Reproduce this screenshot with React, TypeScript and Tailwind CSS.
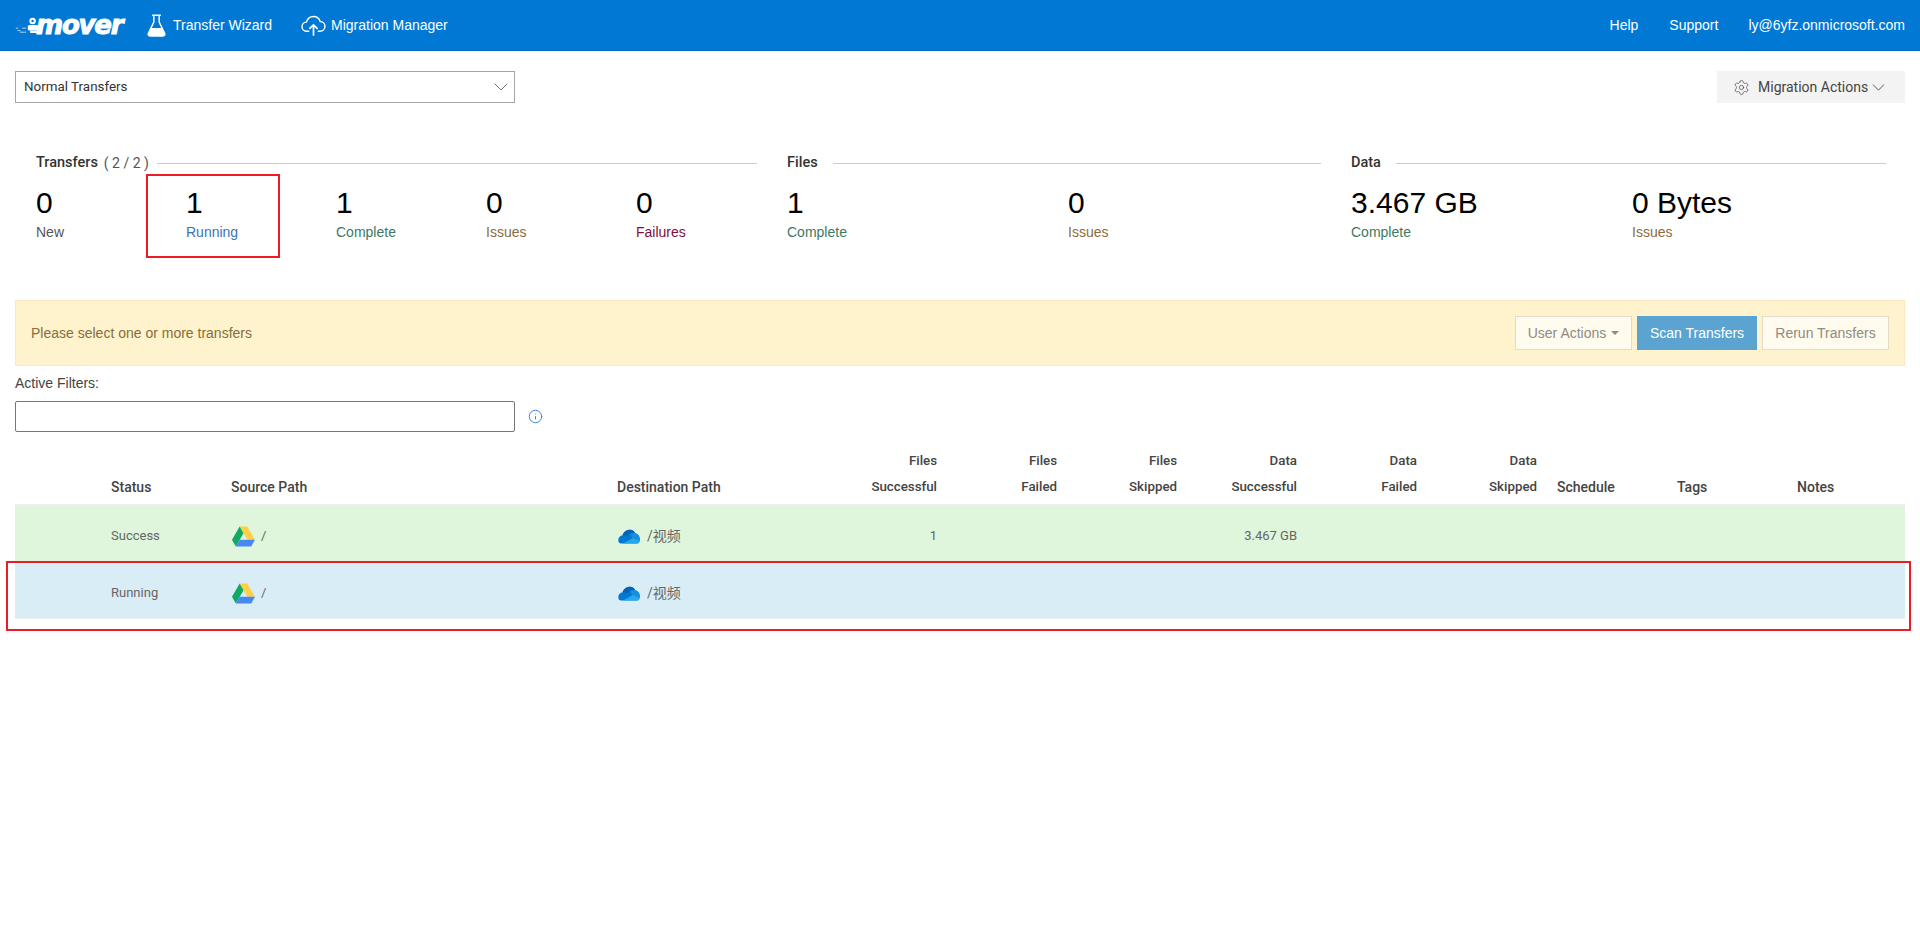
import React from "react";
import { Settings, Info } from "lucide-react";

const arial = "font-['Liberation_Sans',Arial,sans-serif]";
const ui = "font-['Roboto','Noto_Sans_CJK_SC',sans-serif]";
const grid = "grid grid-cols-[88px_120px_386px_217px_120px_120px_120px_120px_120px_120px_123px_120px_116px]";

function Chevron({ className }: { className: string }) {
  return (
    <svg viewBox="0 0 14 8" className={className} fill="none" stroke="currentColor" strokeWidth="1">
      <path d="M.7.7 7 7l6.300-6.300" />
    </svg>
  );
}

function Flask() {
  return (
    <svg viewBox="0 0 20 24" className="h-[23px] w-[19px]" fill="none">
      <path d="M6 1.200h8" stroke="#fff" strokeWidth="1.600" strokeLinecap="round" />
      <path d="M7.200 1.500v6.800L1.400 20.300c-.7 1.500.2 2.700 1.700 2.700h13.800c1.500 0 2.400-1.200 1.700-2.700L12.800 8.300V1.500" stroke="#fff" strokeWidth="1.500" />
      <path d="M4.600 14.600h10.800l3 6.200c.4 1-.2 2.200-1.500 2.200H3.100c-1.300 0-1.900-1.200-1.500-2.200z" fill="#fff" />
    </svg>
  );
}

function CloudUp() {
  return (
    <svg viewBox="0 0 26 22" className="h-[21px] w-[25px]" fill="none" stroke="#fff" strokeWidth="1.500" strokeLinecap="round" strokeLinejoin="round">
      <path d="M8 17H6.200C3.300 17 1 14.900 1 12.200c0-2.500 2-4.500 4.500-4.700C6.600 4 9.400 1.500 13 1.500c3.400 0 6.100 2.200 7 5.300 2.800.1 5 2.300 5 5 0 2.900-2.200 5.200-5.100 5.200H18" />
      <path d="M13 21V10.500M9.200 14 13 10.200l3.800 3.800" strokeWidth="1.800" />
    </svg>
  );
}

function Logo() {
  return (
    <div className="flex items-center w-[132px]">
      <svg viewBox="0 0 30 22" className="h-[22px] w-[24px] shrink-0 -mr-[3px]">
        <circle cx="22" cy="6" r="4" fill="#fff" />
        <circle cx="22" cy="6" r="1.500" fill="#0078d4" />
        <rect x="16" y="11" width="13" height="7" rx="2" fill="#fff" />
        <rect x="19" y="18" width="9" height="3" fill="#fff" />
        <path d="M1 15h3M3 18h4M6 20h8M9 15h5" stroke="#dbeafe" strokeWidth="1" />
      </svg>
      <span className="font-['DejaVu_Sans',sans-serif] font-bold italic text-[26px] leading-none tracking-[-1.2px] text-white [-webkit-text-stroke:1px_#fff]">mover</span>
    </div>
  );
}

function Drive() {
  return (
    <svg viewBox="0 0 24 21" className="h-[21px] w-[23px] shrink-0">
      <polygon points="8,0 16,0 24,14 16,14" fill="#ffcf48" />
      <polygon points="8,0 12,7 4,21 0,14" fill="#11a861" />
      <polygon points="8,14 24,14 20,21 4,21" fill="#4687f4" />
    </svg>
  );
}

function OneDrive() {
  return (
    <svg viewBox="0 0 24 16" className="h-[15px] w-[22px] shrink-0">
      <path d="M3.500 15.700C1.500 15.700.3 14 .3 12 .3 9 2.500 6.800 5 6.600 6 3 9.500.6 13.300.6c2.500 0 4.500 1.400 5.400 3.900 3 .4 5.100 3 5.100 6.500 0 2.800-1.300 4.700-3.300 4.700z" fill="#0078d4" />
      <path d="M5 6.600C6 3 9.500.6 13.300.6c2.500 0 4.500 1.400 5.400 3.900-2.200-.5-4.200 0-5.700 1L10 8C8.500 7 7 6.500 5 6.600z" fill="#0364b8" />
      <path d="M13 5.500c1.700-1 3.700-1.500 5.700-1 3 .4 5.100 3 5.100 8L16 9.500z" fill="#1490df" />
      <path d="M5.500 15.700 16 9.500l7.800 3c-.3 2-1.800 3.200-3.300 3.200z" fill="#28a8ea" />
    </svg>
  );
}

function Stat({ value, label, color }: { value: string; label: string; color: string }) {
  return (
    <div className="flex flex-col pt-px">
      <span className={`${arial} text-[30px] leading-[34px] text-black`}>{value}</span>
      <span className={`${arial} text-[14px] leading-[20px] mt-[2px] ${color}`}>{label}</span>
    </div>
  );
}

function Heading({ title, extra }: { title: string; extra?: string }) {
  return (
    <div className="flex items-center h-[20px] mb-[12px]">
      <span className={`${ui} font-medium text-[14.5px] text-[#333]`}>{title}</span>
      {extra && <span className={`${ui} text-[14px] text-[#555] ml-[6px]`}>{extra}</span>}
      <div className={`flex-1 h-px bg-[#ccc] ${extra ? "ml-[8px]" : "ml-[15px]"}`} />
    </div>
  );
}

function Head2({ a, b }: { a: string; b: string }) {
  return (
    <div className={`${ui} font-medium text-[13.3px] text-[#444] text-right pr-[9px] flex flex-col leading-[26px]`}>
      <span>{a}</span>
      <span>{b}</span>
    </div>
  );
}

function HeadL({ t, cls = "pl-2" }: { t: string; cls?: string }) {
  return <div className={`${ui} font-medium text-[14px] text-[#444] ${cls} self-end leading-[26px]`}>{t}</div>;
}

function Row({ status, bg, files, data }: { status: string; bg: string; files?: string; data?: string }) {
  const cell = `${ui} text-[13px] text-[#666]`;
  return (
    <div className={`${grid} items-center h-[57px] pt-[5px] border-t-[2px] border-[#eeeeee] ${bg}`}>
      <div />
      <div className={`${cell} pl-2`}>{status}</div>
      <div className={`${cell} pl-[9px] flex items-center gap-[6px]`}><Drive /> /</div>
      <div className={`${cell} pl-[9px] flex items-center gap-[7px]`}><OneDrive /><span className="text-[14px]">/视频</span></div>
      <div className={`${cell} text-right pr-[9px]`}>{files}</div>
      <div />
      <div />
      <div className={`${cell} text-[13.5px] text-right pr-[9px]`}>{data}</div>
    </div>
  );
}

export default function App() {
  return (
    <div className="relative min-h-[936px] bg-white">
      <header className={`${arial} h-[51px] bg-[#0078d4] border-b border-[#0067b8] flex items-center pl-[15px] pr-[15px] text-white text-[14px]`}>
        <Logo />
        <div className="flex items-center gap-[7px]">
          <Flask />
          <span>Transfer Wizard</span>
        </div>
        <div className="flex items-center gap-[5px] ml-[29px]">
          <CloudUp />
          <span>Migration Manager</span>
        </div>
        <div className="ml-auto flex items-center gap-[30px]">
          <span className="mr-px">Help</span>
          <span>Support</span>
          <span>ly@6yfz.onmicrosoft.com</span>
        </div>
      </header>

      <main className="px-[15px]">
        <div className="flex items-center justify-between pt-[20px]">
          <div className={`${ui} w-[500px] h-[32px] border border-[#a6a6a6] flex items-center justify-between pl-[8px] pr-[6px] text-[13.4px] text-[#333]`}>
            <span>Normal Transfers</span>
            <Chevron className="w-[14px] h-[8px] text-[#777]" />
          </div>
          <div className={`${ui} w-[188px] h-[32px] bg-[#f3f3f3] flex items-center pl-[16px] text-[14px] text-[#444]`}>
            <Settings size={17} strokeWidth={1} className="text-[#444]" />
            <span className="ml-[8px]">Migration Actions</span>
            <Chevron className="ml-[4px] w-[13px] h-[7px] text-[#444]" />
          </div>
        </div>

        <div className="flex gap-[30px] pl-[21px] pr-[19px] mt-[50px]">
          <section className="w-[721px]">
            <Heading title="Transfers" extra="( 2 / 2 )" />
            <div className="grid grid-cols-[150px_150px_150px_150px_120px]">
              <Stat value="0" label="New" color="text-[#555]" />
              <Stat value="1" label="Running" color="text-[#3a74b4]" />
              <Stat value="1" label="Complete" color="text-[#3c7a64]" />
              <Stat value="0" label="Issues" color="text-[#8a6d3b]" />
              <Stat value="0" label="Failures" color="text-[#800f3a]" />
            </div>
          </section>
          <section className="w-[534px]">
            <Heading title="Files" />
            <div className="grid grid-cols-[281px_1fr]">
              <Stat value="1" label="Complete" color="text-[#3c7a64]" />
              <Stat value="0" label="Issues" color="text-[#8a6d3b]" />
            </div>
          </section>
          <section className="flex-1">
            <Heading title="Data" />
            <div className="grid grid-cols-[281px_1fr]">
              <Stat value="3.467 GB" label="Complete" color="text-[#3c7a64]" />
              <Stat value="0 Bytes" label="Issues" color="text-[#8a6d3b]" />
            </div>
          </section>
        </div>

        <div className={`${arial} mt-[58px] h-[66px] bg-[#fef3cd] border border-[#fbe8c0] flex items-center justify-between pl-[15px] pr-[15px] text-[14px]`}>
          <span className="text-[#8a6d3b]">Please select one or more transfers</span>
          <div className="flex gap-[5px]">
            <div className="w-[117px] h-[34px] bg-[#fffbef] border border-[#e3dccb] text-[#8f8c80] flex items-center justify-center gap-[5px]">
              User Actions
              <span className="w-0 h-0 border-x-[4px] border-x-transparent border-t-[4px] border-t-[#8f8c80]" />
            </div>
            <div className="w-[120px] h-[34px] bg-[#5ba4d1] border border-[#5ba4d1] text-white flex items-center justify-center">Scan Transfers</div>
            <div className="w-[127px] h-[34px] bg-[#fffbef] border border-[#e3dccb] text-[#8f8c80] flex items-center justify-center">Rerun Transfers</div>
          </div>
        </div>

        <div className={`${arial} text-[14px] text-[#444] leading-[20px] mt-[7px]`}>Active Filters:</div>
        <div className="flex items-center mt-[8px]">
          <div className="w-[500px] h-[31px] border border-[#767676] rounded-[2px]" />
          <Info size={15} strokeWidth={1.5} className="ml-[13px] text-[#2f7fd6]" />
        </div>

        <div className={`${grid} mt-[16px] pb-[4px] h-[56px]`}>
          <div />
          <HeadL t="Status" />
          <HeadL t="Source Path" />
          <HeadL t="Destination Path" />
          <Head2 a="Files" b="Successful" />
          <Head2 a="Files" b="Failed" />
          <Head2 a="Files" b="Skipped" />
          <Head2 a="Data" b="Successful" />
          <Head2 a="Data" b="Failed" />
          <Head2 a="Data" b="Skipped" />
          <HeadL t="Schedule" cls="pl-[11px]" />
          <HeadL t="Tags" />
          <HeadL t="Notes" />
        </div>
        <Row status="Success" bg="bg-[#dff5dc]" files="1" data="3.467 GB" />
        <Row status="Running" bg="bg-[#d9edf7]" />
        <div className="h-px bg-[#eeeeee]" />
      </main>

      <div className="absolute left-[6px] top-[561px] w-[1905px] h-[70px] border-2 border-[#ed1c24]" />
      <div className="absolute left-[146px] top-[174px] w-[134px] h-[84px] border-2 border-[#ed1c24]" />
    </div>
  );
}
